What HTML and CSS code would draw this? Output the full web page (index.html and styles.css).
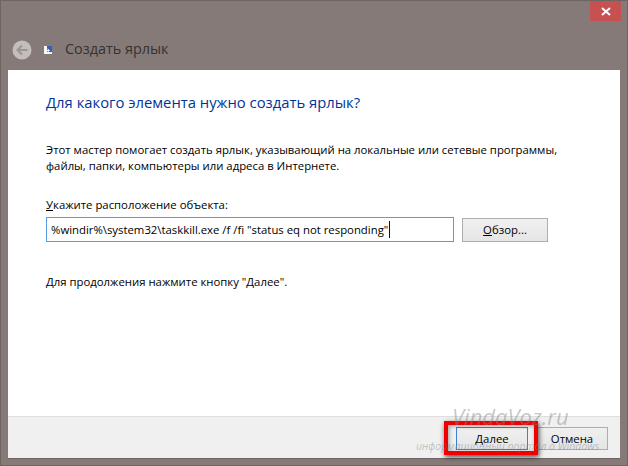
FILE: index.html
```html
<!DOCTYPE html>
<html lang="ru">
<head>
<meta charset="utf-8">
<title>Создать ярлык</title>
<link rel="stylesheet" href="styles.css">
</head>
<body>
<div class="window">
  <div class="titlebar"><div class="close"><svg width="10" height="9" viewBox="0 0 10 9"><path d="M1 1 L9 8 M9 1 L1 8" stroke="#fff" stroke-width="2" fill="none"/></svg></div></div>
  <div class="nav">
    <svg class="back" width="20" height="20" viewBox="0 0 20 20"><circle cx="10" cy="10" r="9.5" fill="#c3bdbb"/><path d="M15.5 10 H6 M10 5.5 L5.5 10 L10 14.5" stroke="#9b9492" stroke-width="2" fill="none"/></svg>
    <svg class="shortcut" width="8" height="8" viewBox="0 0 8 8"><rect width="8" height="8" fill="#f4f6fa"/><rect x="3" y="0" width="5" height="6" fill="#2f62b0"/><path d="M2 7 V4.5 H5 M3.5 3 L5.5 4.5 L3.5 6" stroke="#fff" stroke-width="1" fill="none"/></svg>
    <span class="title">Создать ярлык</span>
  </div>
  <div class="panel">
    <main class="content">
      <h1 class="heading">Для какого элемента нужно создать ярлык?</h1>
      <p class="intro">Этот мастер помогает создать ярлык, указывающий на локальные или сетевые программы,<br>файлы, папки, компьютеры или адреса в Интернете.</p>
      <label class="label"><u>У</u>кажите расположение объекта:</label>
      <div class="row">
        <div class="input">%windir%\system32\taskkill.exe /f /fi "status eq not responding"<span class="caret"></span></div>
        <div class="btn browse"><u>О</u>бзор...</div>
      </div>
      <p class="hint">Для продолжения нажмите кнопку "Далее".</p>
    </main>
    <footer class="footer">
      <div class="btn next">Далее</div>
      <div class="btn cancel">Отмена</div>
    </footer>
  </div>
  <div class="redbox"></div>
  <div class="wm wm-big">VindaVoz.ru</div>
  <div class="wm wm-small">информационный портал о Windows</div>
</div>
</body>
</html>
```
FILE: styles.css
```css
* { box-sizing: border-box; }
html, body { margin: 0; padding: 0; }
body { width: 628px; height: 466px; overflow: hidden; font-family: "Open Sans", "Noto Sans", sans-serif; font-size: 11.35px; color: #000; }
.window { position: relative; width: 628px; height: 466px; background: #857a77; border: 1px solid #6e6563; display: flex; flex-direction: column; padding: 0 7px 7px; }
.titlebar { height: 20px; display: flex; justify-content: flex-end; margin-right: -1px; }
.close { width: 31px; height: 20px; background: #c75050; display: flex; align-items: center; justify-content: center; }
.nav { height: 49px; display: flex; align-items: center; padding: 0 0 0 4px; }
.back { margin-top: 8px; }
.shortcut { margin: 8px 0 0 12px; }
.title { margin: 5px 0 0 13px; font-size: 14.4px; color: #333; }
.panel { flex: 1; display: flex; flex-direction: column; box-shadow: 0 1px 0 #6e6563; }
.content { flex: 1; background: #fff; padding: 22px 38px 0; }
.heading { margin: 0; font-size: 14.8px; font-weight: 400; line-height: 20px; color: #003399; }
.intro { margin: 30px 0 0; line-height: 16px; }
.label { display: block; margin-top: 23px; line-height: 16px; }
.row { display: flex; align-items: flex-start; margin-top: 4px; }
.input { width: 408px; height: 25px; border: 1px solid #569de5; padding: 0 4px 1px; display: flex; align-items: center; white-space: nowrap; }
.caret { width: 1px; height: 17px; background: #111; margin-left: 1px; }
.btn { height: 24px; border: 1px solid #adadad; background: linear-gradient(#f0f0f0, #e5e5e5); display: flex; align-items: center; justify-content: center; }
.browse { width: 86px; margin: 1px 0 0 8px; padding-bottom: 1px; }
.hint { margin: 32px 0 0; line-height: 16px; }
.footer { height: 42px; background: #f0f0f0; border-top: 1px solid #dfdfdf; display: flex; align-items: flex-start; justify-content: flex-end; gap: 8px; padding: 10px 12px 0 0; }
.next { width: 72px; height: 23px; border-color: #3c7fd4; }
.cancel { width: 72px; height: 23px; }
.redbox { position: absolute; left: 443px; top: 420px; width: 94px; height: 34px; border: 4px solid #f00000; box-shadow: 1px 2px 5px rgba(0,0,0,.7), inset 1px 1px 4px rgba(0,0,0,.35); }
.wm { position: absolute; font-style: italic; color: rgba(130,130,130,.45); white-space: nowrap; }
.wm-big { left: 451px; top: 403px; font-size: 22px; line-height: 24px; }
.wm-small { left: 415px; top: 439px; font-size: 10.5px; line-height: 12px; }
```
